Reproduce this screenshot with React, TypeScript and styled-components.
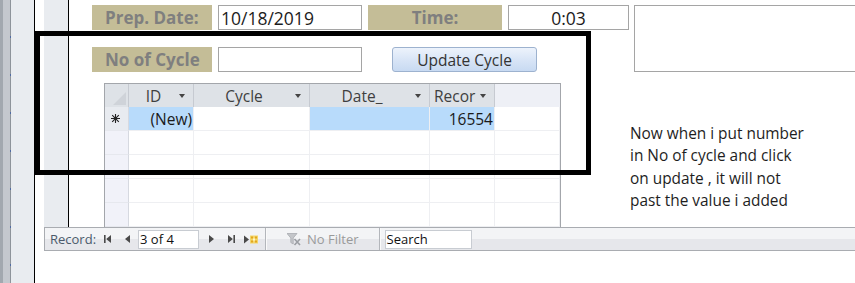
import React from 'react';
import styled, { createGlobalStyle } from 'styled-components';

const GlobalStyle = createGlobalStyle`
  html, body {
    margin: 0;
    padding: 0;
    background: #fff;
  }
  body {
    width: 855px;
    height: 283px;
    overflow: hidden;
    font-family: 'Open Sans', sans-serif;
  }
`;

const columns = [
	{ key: 'id', title: 'ID' },
	{ key: 'cycle', title: 'Cycle' },
	{ key: 'date', title: 'Date_' },
	{ key: 'record', title: 'Recor' },
];

const emptyRows = [1, 2, 3, 4];

const FirstIcon = () => (
	<svg width="7" height="8" viewBox="0 0 7 8">
		<rect x="0" y="0" width="1.6" height="8" fill="#4a4a4a" />
		<polygon points="7,0 2.2,4 7,8" fill="#4a4a4a" />
	</svg>
);

const PrevIcon = () => (
	<svg width="5" height="8" viewBox="0 0 5 8">
		<polygon points="5,0 0,4 5,8" fill="#4a4a4a" />
	</svg>
);

const NextIcon = () => (
	<svg width="5" height="8" viewBox="0 0 5 8">
		<polygon points="0,0 5,4 0,8" fill="#4a4a4a" />
	</svg>
);

const LastIcon = () => (
	<svg width="7" height="8" viewBox="0 0 7 8">
		<polygon points="0,0 4.8,4 0,8" fill="#4a4a4a" />
		<rect x="5.4" y="0" width="1.6" height="8" fill="#4a4a4a" />
	</svg>
);

const NewIcon = () => (
	<svg width="15" height="9" viewBox="0 0 15 9">
		<polygon points="0,0.5 5,4.5 0,8.5" fill="#4a4a4a" />
		<rect x="6" y="0.5" width="8" height="8" fill="#f3d66a" />
		<rect x="7" y="1.5" width="2" height="2" fill="#e3a51d" />
		<rect x="11" y="1.5" width="2" height="2" fill="#e3a51d" />
		<rect x="9" y="3.5" width="2" height="2" fill="#fff6c9" />
		<rect x="7" y="5.5" width="2" height="2" fill="#e3a51d" />
		<rect x="11" y="5.5" width="2" height="2" fill="#e3a51d" />
	</svg>
);

const FilterIcon = () => (
	<svg width="14" height="13" viewBox="0 0 14 13">
		<polygon points="0,0.5 10,0.5 6.2,5 6.2,11 3.8,9.5 3.8,5" fill="#c4c6ca" stroke="#a9acb1" strokeWidth="0.8" />
		<path d="M7.5 6 L13 12 M13 6 L7.5 12" stroke="#9b9ea3" strokeWidth="1.6" />
	</svg>
);

const NewRowMark = () => (
	<svg width="9" height="9" viewBox="0 0 9 9">
		<path d="M4.5 0 V9 M0 4.5 H9 M1.2 1.2 L7.8 7.8 M7.8 1.2 L1.2 7.8" stroke="#222" strokeWidth="1.1" />
	</svg>
);

const SelectAllMark = () => (
	<svg width="13" height="13" viewBox="0 0 13 13">
		<polygon points="13,0 13,13 0,13" fill="#cfd3d9" />
	</svg>
);

export default function App() {
	return (
		<Window>
			<GlobalStyle />
			<Sidebar>
				<Frame />
				<Ruler />
				<Pane />
			</Sidebar>
			<Main>
				<Upper>
					<Gutter />
					<FormSelector />
					<FormBody>
						<TopArea>
							<Fields>
								<FieldRow>
									<Label $w={120}>Prep. Date:</Label>
									<TextBox $w={144}>10/18/2019</TextBox>
									<Label $w={134} $center>
										Time:
									</Label>
									<TextBox $w={121} $center>
										0:03
									</TextBox>
								</FieldRow>
								<FieldRow>
									<Label $w={120}>No of Cycle</Label>
									<TextBox $w={144} />
									<UpdateButton>Update Cycle</UpdateButton>
								</FieldRow>
							</Fields>
							<MemoBox />
						</TopArea>
						<LowerArea>
							<Datasheet>
								<HeaderCell $selector>
									<SelectAllMark />
								</HeaderCell>
								{columns.map((c) => (
									<HeaderCell key={c.key}>
										<HeaderTitle>{c.title}</HeaderTitle>
										<DropArrow />
									</HeaderCell>
								))}
								<HeaderCell $blank />

								<SelectorCell $current>
									<NewRowMark />
								</SelectorCell>
								<Cell $selected>(New)</Cell>
								<Cell />
								<Cell $selected />
								<Cell $selected>16554</Cell>
								<Cell />

								{emptyRows.map((r) => (
									<React.Fragment key={r}>
										<SelectorCell />
										<Cell />
										<Cell />
										<Cell />
										<Cell />
										<Cell />
									</React.Fragment>
								))}
							</Datasheet>
							<Note>
								Now when i put number
								<br />
								in No of cycle and click
								<br />
								on update , it will not
								<br />
								past the value i added
							</Note>
						</LowerArea>
					</FormBody>
				</Upper>
				<NavBar>
					<NavLabel>Record:</NavLabel>
					<NavButton $w={16} $ml={3}>
						<FirstIcon />
					</NavButton>
					<NavButton $w={16} $ml={4}>
						<PrevIcon />
					</NavButton>
					<PositionBox>3 of 4</PositionBox>
					<NavButton $w={16} $ml={4}>
						<NextIcon />
					</NavButton>
					<NavButton $w={16} $ml={4}>
						<LastIcon />
					</NavButton>
					<NavButton $w={20} $ml={2}>
						<NewIcon />
					</NavButton>
					<NavDivider $ml={4} />
					<FilterState>
						<FilterIcon />
						<span>No Filter</span>
					</FilterState>
					<NavDivider $ml={20} />
					<SearchBox>Search</SearchBox>
				</NavBar>
			</Main>
			<Highlight />
		</Window>
	);
}

const Window = styled.div`
	position: relative;
	width: 855px;
	height: 283px;
	display: flex;
	overflow: hidden;
	background: #fff;
`;

const Sidebar = styled.div`
	display: flex;
	flex-shrink: 0;
	border-right: 1px solid #000;
`;

const Frame = styled.div`
	width: 10px;
	background: linear-gradient(to right, #a2a8af 0 3px, #c4c8ce 3px 10px);
`;

const Ruler = styled.div`
	width: 1px;
	background: repeating-linear-gradient(to bottom, #8e949b 0 36px, #4f6aa3 36px 38px);
`;

const Pane = styled.div`
	width: 23px;
	background: #e9ecf0;
`;

const Main = styled.div`
	flex: 1;
	display: flex;
	flex-direction: column;
	min-width: 0;
`;

const Upper = styled.div`
	height: 227px;
	display: flex;
	flex-shrink: 0;
`;

const Gutter = styled.div`
	width: 9px;
	flex-shrink: 0;
`;

const FormSelector = styled.div`
	width: 24px;
	flex-shrink: 0;
	background: #e9ecf0;
	border-right: 1px solid #000;
`;

const FormBody = styled.div`
	flex: 1;
	padding: 5px 0 0 23px;
	display: flex;
	flex-direction: column;
	gap: 11px;
	min-width: 0;
`;

const TopArea = styled.div`
	display: flex;
	align-items: flex-start;
	gap: 5px;
`;

const Fields = styled.div`
	display: flex;
	flex-direction: column;
	gap: 17px;
`;

const FieldRow = styled.div`
	display: flex;
	gap: 6px;
`;

const Label = styled.div<{ $w: number; $center?: boolean }>`
	width: ${(p) => p.$w}px;
	height: 25px;
	box-sizing: border-box;
	background: #c4bd97;
	color: #7f7f7f;
	font: 700 17px 'Open Sans', sans-serif;
	display: flex;
	align-items: center;
	justify-content: ${(p) => (p.$center ? 'center' : 'flex-start')};
	padding-left: ${(p) => (p.$center ? 0 : 13)}px;
	& + & {
		margin-left: -1px;
	}
`;

const TextBox = styled.div<{ $w: number; $center?: boolean }>`
	width: ${(p) => p.$w}px;
	height: 25px;
	box-sizing: border-box;
	border: 1px solid #a5a5a5;
	background: #fff;
	color: #1c1c1c;
	font: 400 17.5px 'Open Sans', sans-serif;
	display: flex;
	align-items: center;
	justify-content: ${(p) => (p.$center ? 'center' : 'flex-start')};
	padding-left: ${(p) => (p.$center ? 0 : 2)}px;
`;

const UpdateButton = styled.div`
	margin-left: 24px;
	width: 145px;
	height: 25px;
	box-sizing: border-box;
	border: 1px solid #9db2cf;
	border-radius: 3px;
	background: linear-gradient(#edf3fc, #d7e4f6 55%, #c8daf2);
	color: #333;
	font: 400 15.5px 'Open Sans', sans-serif;
	display: flex;
	align-items: center;
	justify-content: center;
`;

const MemoBox = styled.div`
	width: 240px;
	height: 67px;
	flex-shrink: 0;
	box-sizing: border-box;
	border: 1px solid #a5a5a5;
`;

const LowerArea = styled.div`
	display: flex;
	align-items: flex-start;
	padding-left: 12px;
`;

const Datasheet = styled.div`
	width: 457px;
	height: 144px;
	box-sizing: border-box;
	border: 1px solid #a3a6ab;
	border-bottom: none;
	display: grid;
	grid-template-columns: 24px 65px 116px 120px 65px 1fr;
	grid-template-rows: 23px repeat(5, 24px);
	font-family: 'Open Sans', sans-serif;
	font-size: 15.5px;
`;

const HeaderCell = styled.div<{ $selector?: boolean; $blank?: boolean }>`
	box-sizing: border-box;
	display: flex;
	align-items: center;
	background: ${(p) => (p.$blank ? '#eef0f6' : '#dee2e7')};
	border-right: ${(p) => (p.$blank ? 'none' : '1px solid #c6cad1')};
	justify-content: ${(p) => (p.$selector ? 'flex-end' : 'flex-start')};
	align-items: ${(p) => (p.$selector ? 'flex-end' : 'center')};
	padding: ${(p) => (p.$selector ? '0 2px 2px 0' : '0 0 0 4px')};
	color: #3f3f3f;
`;

const HeaderTitle = styled.span`
	flex: 1;
	min-width: 0;
	text-align: center;
	white-space: nowrap;
`;

const DropArrow = styled.span`
	width: 0;
	height: 0;
	margin: 0 8px 0 5px;
	border-left: 3.5px solid transparent;
	border-right: 3.5px solid transparent;
	border-top: 4px solid #444;
	flex-shrink: 0;
`;

const SelectorCell = styled.div<{ $current?: boolean }>`
	box-sizing: border-box;
	display: flex;
	align-items: center;
	padding-left: 6px;
	background: ${(p) => (p.$current ? '#e8ebf0' : '#f1f2f9')};
	border-right: 1px solid #d6d9e0;
	border-bottom: 1px solid #e6e8ee;
`;

const Cell = styled.div<{ $selected?: boolean }>`
	box-sizing: border-box;
	display: flex;
	align-items: center;
	justify-content: flex-end;
	padding-right: 1px;
	background: ${(p) => (p.$selected ? '#b8dbfb' : '#fff')};
	border-right: 1px solid #eeeff2;
	border-bottom: 1px solid #eeeff2;
	color: #1a1a1a;
`;

const Note = styled.div`
	margin: 40px 0 0 69px;
	font: 400 15.4px/22.4px 'Open Sans', sans-serif;
	color: #1e1e1e;
	white-space: nowrap;
`;

const NavBar = styled.div`
	margin-left: 9px;
	height: 24px;
	flex-shrink: 0;
	box-sizing: border-box;
	border: 1px solid #a9acb1;
	border-right: none;
	background: linear-gradient(#f3f4f6 0 50%, #e6e7eb 50% 100%);
	display: flex;
	align-items: center;
	font-family: 'Open Sans', sans-serif;
	font-size: 12.5px;
`;

const NavLabel = styled.span`
	margin-left: 5px;
	color: #4b5a6b;
	font-size: 13px;
`;

const NavButton = styled.span<{ $w: number; $ml: number }>`
	width: ${(p) => p.$w}px;
	margin-left: ${(p) => p.$ml}px;
	display: flex;
	justify-content: center;
	align-items: center;
`;

const PositionBox = styled.div`
	margin-left: 3px;
	width: 61px;
	height: 19px;
	box-sizing: border-box;
	border: 1px solid #c8ccd2;
	background: #fff;
	color: #111;
	font-size: 13px;
	padding-left: 1px;
	display: flex;
	align-items: center;
`;

const NavDivider = styled.span<{ $ml: number }>`
	align-self: stretch;
	width: 1px;
	margin-left: ${(p) => p.$ml}px;
	background: #b3b6bb;
	box-shadow: 1px 0 0 #fafafa;
`;

const FilterState = styled.div`
	display: flex;
	align-items: center;
	gap: 6px;
	margin-left: 21px;
	color: #9a9a9a;
	font-size: 13px;
`;

const SearchBox = styled.div`
	margin-left: 5px;
	width: 87px;
	height: 19px;
	box-sizing: border-box;
	border: 1px solid #c8ccd2;
	background: #fff;
	color: #111;
	font-size: 13px;
	padding-left: 1px;
	display: flex;
	align-items: center;
`;

const Highlight = styled.div`
	position: absolute;
	left: 35px;
	top: 31px;
	width: 556px;
	height: 144px;
	box-sizing: border-box;
	border: 5px solid #000;
	pointer-events: none;
`;
